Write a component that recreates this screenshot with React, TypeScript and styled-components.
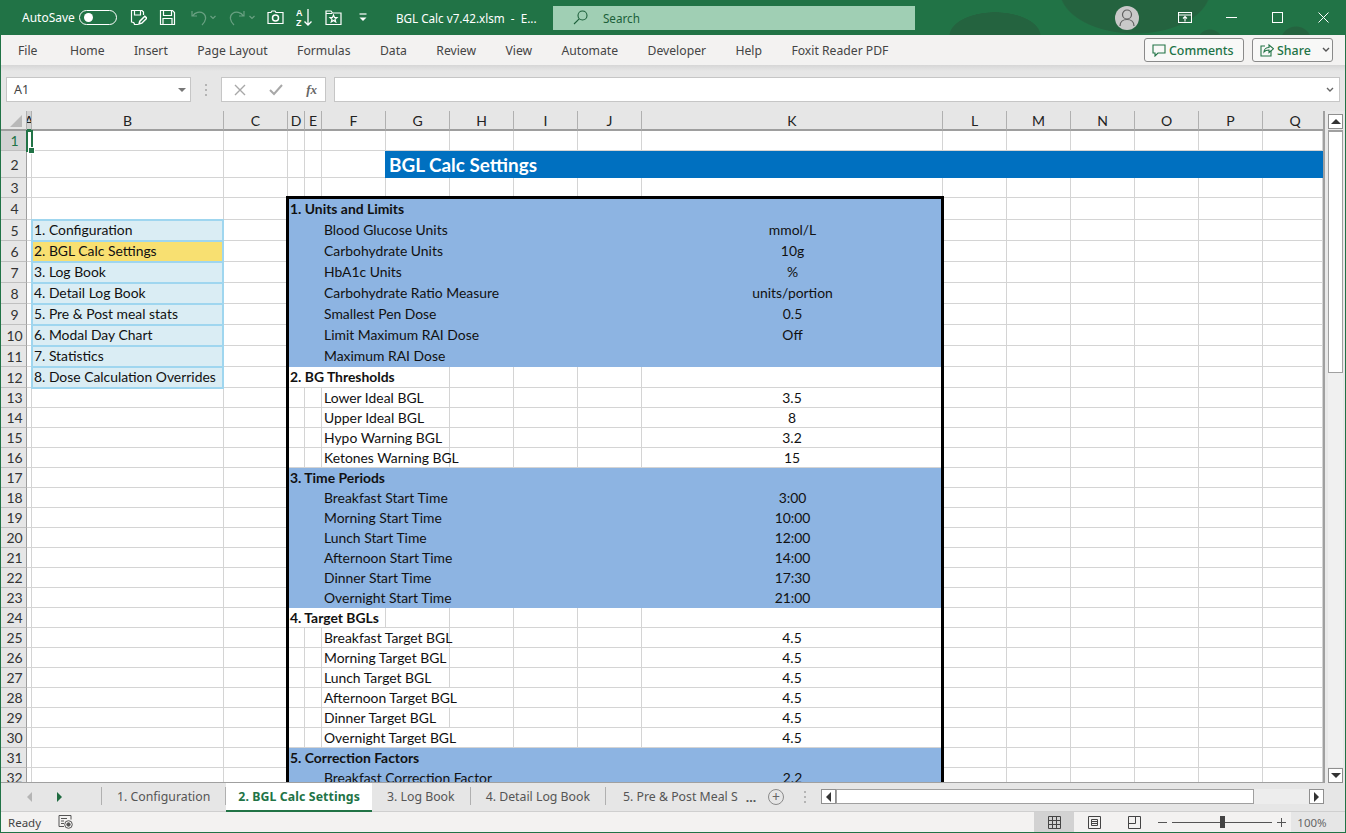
import React from "react";
import styled, { createGlobalStyle } from "styled-components";

const GlobalStyle = createGlobalStyle`
  html, body, #root { margin: 0; padding: 0; height: 100%; }
  body { overflow: hidden; background: #e6e6e6; font-family: "Noto Sans", sans-serif; }
`;

const UI_FONT = `"Noto Sans", "Open Sans", sans-serif`;
const CELL_FONT = `Lato, "Liberation Sans", sans-serif`;
const GREEN = "#217346";

const COLUMNS = ["A", "B", "C", "D", "E", "F", "G", "H", "I", "J", "K", "L", "M", "N", "O", "P", "Q"];
const COLUMN_WIDTHS = "26px 5px 192px 64px 17px 17px 64px 64px 64px 64px 64px 301px 64px 64px 64px 64px 64px 60px";
const ROW_HEIGHTS = "20px 20px 27px 20px 22px repeat(8, 21px) repeat(20, 20px)";

type TableRow =
  | { kind: "head"; text: string; blue: boolean; span: number }
  | { kind: "item"; label: string; value?: string; blue: boolean; span: number };

const head = (text: string, blue: boolean, span: number): TableRow => ({ kind: "head", text, blue, span });
const item = (label: string, value: string | undefined, blue: boolean, span = 2): TableRow => ({
  kind: "item",
  label,
  value,
  blue,
  span,
});

const TABLE: TableRow[] = [
  head("1. Units and Limits", true, 7),
  item("Blood Glucose Units", "mmol/L", true),
  item("Carbohydrate Units", "10g", true),
  item("HbA1c Units", "%", true),
  item("Carbohydrate Ratio Measure", "units/portion", true),
  item("Smallest Pen Dose", "0.5", true),
  item("Limit Maximum RAI Dose", "Off", true),
  item("Maximum RAI Dose", undefined, true),
  head("2. BG Thresholds", false, 4),
  item("Lower Ideal BGL", "3.5", false),
  item("Upper Ideal BGL", "8", false),
  item("Hypo Warning BGL", "3.2", false),
  item("Ketones Warning BGL", "15", false),
  head("3. Time Periods", true, 7),
  item("Breakfast Start Time", "3:00", true),
  item("Morning Start Time", "10:00", true),
  item("Lunch Start Time", "12:00", true),
  item("Afternoon Start Time", "14:00", true),
  item("Dinner Start Time", "17:30", true),
  item("Overnight Start Time", "21:00", true),
  head("4. Target BGLs", false, 3),
  item("Breakfast Target BGL", "4.5", false),
  item("Morning Target BGL", "4.5", false),
  item("Lunch Target BGL", "4.5", false),
  item("Afternoon Target BGL", "4.5", false, 3),
  item("Dinner Target BGL", "4.5", false),
  item("Overnight Target BGL", "4.5", false, 3),
  head("5. Correction Factors", true, 7),
  item("Breakfast Correction Factor", "2.2", true),
];

const MENU = [
  "1. Configuration",
  "2. BGL Calc Settings",
  "3. Log Book",
  "4. Detail Log Book",
  "5. Pre & Post meal stats",
  "6. Modal Day Chart",
  "7. Statistics",
  "8. Dose Calculation Overrides",
];

const RIBBON_TABS = [
  "File",
  "Home",
  "Insert",
  "Page Layout",
  "Formulas",
  "Data",
  "Review",
  "View",
  "Automate",
  "Developer",
  "Help",
  "Foxit Reader PDF",
];

const App_ = styled.div`
  width: 1346px;
  height: 833px;
  box-sizing: border-box;
  display: flex;
  flex-direction: column;
  border-left: 1px solid ${GREEN};
  border-right: 1px solid ${GREEN};
  border-bottom: 1px solid ${GREEN};
  overflow: hidden;
  font-family: ${UI_FONT};
`;

/* title bar */
const TitleBar = styled.div`
  height: 35px;
  flex: none;
  margin: 0 -1px;
  display: flex;
  align-items: center;
  color: #fff;
  background:
    radial-gradient(ellipse 76px 44px at 1135px -10px, #24633f 98%, transparent 100%),
    radial-gradient(ellipse 46px 24px at 995px 36px, #24633f 98%, transparent 100%),
    radial-gradient(circle at 1296px 42px, #24633f 0 15px, transparent 16px),
    radial-gradient(circle at 1210px 42px, #24633f 0 12px, transparent 13px),
    #217346;
`;

const AutoSaveLabel = styled.span`
  margin-left: 22px;
  font-size: 12px;
`;

const Toggle = styled.span`
  width: 38px;
  height: 15px;
  margin-left: 4px;
  box-sizing: border-box;
  border: 1.5px solid #fff;
  border-radius: 8px;
  display: flex;
  align-items: center;
  padding-left: 4px;
  &::before {
    content: "";
    width: 9px;
    height: 9px;
    border-radius: 50%;
    background: #fff;
  }
`;

const QuickIcons = styled.div`
  display: flex;
  align-items: center;
  margin-left: 13px;
  height: 100%;
`;

const QuickIcon = styled.svg<{ $gap?: number; $dim?: boolean }>`
  flex: none;
  margin-right: ${(p) => p.$gap ?? 0}px;
  fill: none;
  stroke: #fff;
  stroke-width: 1.2;
  opacity: ${(p) => (p.$dim ? 0.32 : 1)};
`;

const FileName = styled.span`
  margin-left: 29px;
  width: 157px;
  flex: none;
  font-size: 11.7px;
  white-space: pre;
`;

const SearchBox = styled.div`
  width: 362px;
  height: 24px;
  flex: none;
  display: flex;
  align-items: center;
  gap: 15px;
  padding-left: 20px;
  box-sizing: border-box;
  background: #a0cfb4;
  color: #1c5f3a;
  font-size: 11.7px;
`;

const TitleRight = styled.div`
  margin-left: auto;
  display: flex;
  align-items: center;
  height: 100%;
`;

const Avatar = styled.span`
  width: 24px;
  height: 24px;
  border-radius: 50%;
  background: #c9c9c9;
  display: flex;
  align-items: center;
  justify-content: center;
  margin-right: 23px;
`;

const WindowButton = styled.span`
  width: 46px;
  height: 100%;
  display: flex;
  align-items: center;
  justify-content: center;
`;

/* ribbon tabs */
const Ribbon = styled.div`
  height: 30px;
  flex: none;
  display: flex;
  align-items: center;
  background: #f3f2f1;
  padding-left: 17px;
  color: #444;
  font-size: 12.2px;
`;

const RibbonTabs = styled.nav`
  display: flex;
  gap: 29.4px;
`;

const RibbonTab = styled.span<{ $first?: boolean }>`
  margin-right: ${(p) => (p.$first ? 3 : 0)}px;
  white-space: nowrap;
`;

const RibbonActions = styled.div`
  margin-left: auto;
  display: flex;
  gap: 8px;
  padding-right: 12px;
`;

const ActionButton = styled.button<{ $width: number }>`
  width: ${(p) => p.$width}px;
  height: 24px;
  padding: 0 0 0 7px;
  display: flex;
  align-items: center;
  gap: 3px;
  box-sizing: border-box;
  background: #f8f8f7;
  border: 1px solid #8a8a8a;
  border-radius: 3px;
  color: ${GREEN};
  font-family: ${UI_FONT};
  font-size: 12.4px;
  font-weight: 500;
`;

/* formula bar */
const FormulaBar = styled.div`
  height: 46px;
  flex: none;
  box-sizing: border-box;
  padding: 12px 5px 9px 5px;
  display: flex;
  align-items: stretch;
  background: linear-gradient(#d6d6d6 0, #e6e6e6 6px);
`;

const NameBox = styled.div`
  width: 185px;
  box-sizing: border-box;
  background: #fff;
  border: 1px solid #c6c6c6;
  display: flex;
  align-items: center;
  justify-content: space-between;
  padding: 0 4px 0 7px;
  font-size: 12.5px;
  color: #444;
`;

const Caret = styled.span`
  width: 0;
  height: 0;
  border-left: 4px solid transparent;
  border-right: 4px solid transparent;
  border-top: 4px solid #777;
`;

const GripDots = styled.span<{ $height?: number; $left?: number; $right?: number }>`
  flex: none;
  width: 2px;
  height: ${(p) => p.$height ?? 12}px;
  margin: 0 ${(p) => p.$right ?? 14}px 0 ${(p) => p.$left ?? 14}px;
  align-self: center;
  background: repeating-linear-gradient(#b4b4b4 0 2px, transparent 2px 5px);
`;

const FunctionBox = styled.div`
  width: 105px;
  box-sizing: border-box;
  background: #fff;
  border: 1px solid #c6c6c6;
  display: flex;
  align-items: center;
  justify-content: space-between;
  padding: 0 8px 0 12px;
`;

const FxLabel = styled.span`
  font-family: "Liberation Serif", serif;
  font-style: italic;
  font-weight: 700;
  font-size: 13px;
  color: #666;
`;

const FormulaInput = styled.div`
  margin-left: 8px;
  flex: 1;
  box-sizing: border-box;
  background: #fff;
  border: 1px solid #c6c6c6;
  display: flex;
  align-items: center;
  justify-content: flex-end;
  padding-right: 5px;
`;

/* sheet */
const SheetArea = styled.div`
  flex: 1;
  min-height: 0;
  display: flex;
`;

const SheetGrid = styled.div`
  width: 1322px;
  flex: none;
  position: relative;
  display: grid;
  grid-template-columns: ${COLUMN_WIDTHS};
  grid-template-rows: ${ROW_HEIGHTS};
  overflow: hidden;
  background: #fff;
  border-right: 2px solid #a0a0a0;
  border-bottom: 1px solid #a0a0a0;
  box-sizing: content-box;
  font-family: ${CELL_FONT};
  font-size: 13.9px;
  color: #111;
`;

const Corner = styled.div`
  background: #e6e6e6;
  border-right: 1px solid #b0b0b0;
  border-bottom: 2px solid #9e9e9e;
  box-sizing: border-box;
  position: relative;
  &::after {
    content: "";
    position: absolute;
    right: 4px;
    bottom: 2px;
    border-style: solid;
    border-width: 0 0 12px 12px;
    border-color: transparent transparent #b9b9b9 transparent;
  }
`;

const ColumnHeader = styled.div<{ $active?: boolean; $last?: boolean }>`
  box-sizing: border-box;
  background: ${(p) => (p.$active ? "#d2d2d2" : "#e6e6e6")};
  border-right: ${(p) => (p.$last ? "none" : "1px solid #b0b0b0")};
  border-bottom: 2px solid ${(p) => (p.$active ? GREEN : "#9e9e9e")};
  padding-left: ${(p) => (p.$last ? 4 : 0)}px;
  display: flex;
  align-items: center;
  justify-content: center;
  overflow: hidden;
  color: #222;
  font-size: 14px;
`;

const RowHeader = styled.div<{ $active?: boolean }>`
  box-sizing: border-box;
  background: ${(p) => (p.$active ? "#d2d2d2" : "#e6e6e6")};
  border-right: 1px solid #9e9e9e;
  border-bottom: 1px solid #c0c0c0;
  display: flex;
  align-items: center;
  justify-content: center;
  padding-left: 2px;
  color: ${(p) => (p.$active ? GREEN : "#333")};
  font-size: 14px;
`;

const Cell = styled.div<{ $span?: number; $fill?: string; $bare?: boolean; $lift?: boolean }>`
  grid-column: span ${(p) => p.$span ?? 1};
  box-sizing: border-box;
  min-width: 0;
  display: flex;
  align-items: center;
  white-space: nowrap;
  padding-bottom: ${(p) => (p.$lift ? 2 : p.$bare ? 1 : 0)}px;
  background: ${(p) => p.$fill ?? "transparent"};
  border-right: ${(p) => (p.$bare ? "none" : "1px solid #d4d4d4")};
  border-bottom: ${(p) => (p.$bare ? "none" : "1px solid #d4d4d4")};
`;

const TitleCell = styled(Cell)`
  background: #0070c0;
  box-shadow: -1px 0 0 #0070c0;
  color: #fff;
  font-weight: 700;
  font-size: 18.9px;
  padding-left: 3px;
  padding-bottom: 1px;
`;

const MenuCell = styled(Cell)<{ $current?: boolean }>`
  position: relative;
  z-index: 1;
  margin-right: 1px;
  background: ${(p) => (p.$current ? "#f8e071" : "#daedf4")};
  border: none;
  box-shadow: inset 0 0 0 1px #9fd6ef, 0 0 0 1px #9fd6ef;
  padding-left: 2px;
  padding-bottom: 2px;
`;

const HeadCell = styled(Cell)`
  font-weight: 700;
  padding-left: 2px;
`;

const LabelCell = styled(Cell)`
  padding-left: 2px;
`;

const ValueCell = styled(Cell)`
  justify-content: center;
`;

/* both overlays are placed by grid lines but stay out of the auto-placement */
const TableFrame = styled.div`
  position: absolute;
  grid-column: 5 / 13;
  grid-row: 5 / 34;
  top: -2px;
  left: -2px;
  right: -1px;
  bottom: -12px;
  border: 3px solid #000;
  z-index: 2;
  pointer-events: none;
`;

const SelectionBox = styled.div`
  position: absolute;
  grid-column: 2 / 3;
  grid-row: 2 / 3;
  top: -1px;
  left: -1px;
  right: -1px;
  bottom: -1px;
  border: 2px solid ${GREEN};
  z-index: 3;
  &::after {
    content: "";
    position: absolute;
    right: -3px;
    bottom: -3px;
    width: 5px;
    height: 5px;
    background: ${GREEN};
    outline: 1px solid #fff;
  }
`;

const VScroll = styled.div`
  flex: 1;
  display: flex;
  flex-direction: column;
  align-items: center;
  padding-top: 3px;
  padding-left: 1px;
  background: #e9e9e9;
`;

const VTrack = styled.div`
  flex: 1;
  width: 15px;
  background: #f0f0f0;
  margin: 1px 0;
`;

const VThumb = styled.div`
  height: 243px;
  box-sizing: border-box;
  background: #fff;
  border: 1px solid #a0a0a0;
  border-top-width: 2px;
`;

const ScrollButton = styled.div`
  width: 15px;
  height: 15px;
  flex: none;
  box-sizing: border-box;
  background: #fff;
  border: 1px solid #8f8f8f;
  display: flex;
  align-items: center;
  justify-content: center;
`;

const Arrow = styled.span<{ $dir: "up" | "down" | "left" | "right"; $color?: string }>`
  width: 0;
  height: 0;
  border-style: solid;
  border-color: transparent;
  ${(p) => {
    const c = p.$color ?? "#333";
    switch (p.$dir) {
      case "up":
        return `border-width: 0 5px 5px 5px; border-bottom-color: ${c};`;
      case "down":
        return `border-width: 5px 5px 0 5px; border-top-color: ${c};`;
      case "left":
        return `border-width: 5px 5px 5px 0; border-right-color: ${c};`;
      default:
        return `border-width: 5px 0 5px 5px; border-left-color: ${c};`;
    }
  }}
`;

/* tabs */
const TabBar = styled.div`
  height: 29px;
  flex: none;
  display: flex;
  align-items: stretch;
  background: #e6e6e6;
  border-bottom: 1px solid #cfcfcf;
  box-sizing: border-box;
  font-size: 12.3px;
  color: #555;
`;

const TabNav = styled.div`
  width: 100px;
  flex: none;
  display: flex;
  align-items: center;
  padding-left: 26px;
  gap: 25px;
  box-sizing: border-box;
`;

const Tab = styled.div<{ $active?: boolean; $clip?: number }>`
  flex: none;
  display: flex;
  align-items: center;
  box-sizing: border-box;
  margin: ${(p) => (p.$active ? "0 0 -1px 0" : "4px 0 6px")};
  padding: 0 ${(p) => (p.$active ? 12 : p.$clip ? 0 : 15)}px 0 ${(p) => (p.$active ? 12 : p.$clip ? 17 : 15)}px;
  white-space: nowrap;
  width: ${(p) => (p.$clip ? `${p.$clip}px` : "auto")};
  letter-spacing: ${(p) => (p.$active ? 0.1 : 0)}px;
  background: ${(p) => (p.$active ? "#fff" : "transparent")};
  color: ${(p) => (p.$active ? GREEN : "#555")};
  font-weight: ${(p) => (p.$active ? 700 : 400)};
  border-right: ${(p) => (p.$active || p.$clip ? "none" : "1px solid #b0b0b0")};
  border-bottom: ${(p) => (p.$active ? `2px solid ${GREEN}` : "none")};
`;

const FirstDivider = styled.span`
  width: 1px;
  flex: none;
  margin: 4px 0 6px;
  background: #b0b0b0;
`;

const More = styled.span`
  flex: none;
  align-self: center;
  width: 22px;
  text-align: center;
  color: #555;
  font-weight: 700;
`;

const AddSheet = styled.span`
  flex: none;
  align-self: center;
  width: 16px;
  height: 16px;
  margin-left: 6px;
  box-sizing: border-box;
  border: 1.5px solid #8a8a8a;
  border-radius: 50%;
  display: flex;
  align-items: center;
  justify-content: center;
  color: #666;
  font-size: 14px;
  line-height: 1;
`;

const HScroll = styled.div`
  flex: 1;
  height: 15px;
  align-self: center;
  margin: 0 21px 1px 0;
  display: flex;
  background: #ededed;
`;

const HThumb = styled.div`
  width: 418px;
  flex: none;
  box-sizing: border-box;
  background: #fff;
  border: 1px solid #a0a0a0;
`;

const HSpacer = styled.div`
  flex: 1;
`;

/* status bar */
const StatusBar = styled.div`
  height: 20px;
  flex: none;
  display: flex;
  align-items: center;
  background: #f3f2f1;
  font-size: 11.5px;
  color: #444;
`;

const Ready = styled.span`
  margin-left: 7px;
  width: 50px;
`;

const ViewGroup = styled.div`
  margin-left: auto;
  height: 100%;
  display: flex;
  align-items: stretch;
`;

const ViewButton = styled.span<{ $active?: boolean }>`
  width: 40px;
  display: flex;
  align-items: center;
  justify-content: center;
  background: ${(p) => (p.$active ? "#d2d2d2" : "transparent")};
`;

const ZoomControl = styled.div`
  margin-left: 4px;
  display: flex;
  align-items: center;
  gap: 5px;
`;

const ZoomSign = styled.span`
  width: 9px;
  height: 1px;
  background: #555;
  position: relative;
`;

const ZoomPlus = styled(ZoomSign)`
  &::after {
    content: "";
    position: absolute;
    left: 4px;
    top: -4px;
    width: 1px;
    height: 9px;
    background: #555;
  }
`;

const ZoomTrack = styled.div`
  width: 100px;
  height: 1px;
  background: #555;
  display: flex;
  align-items: center;
  justify-content: center;
`;

const ZoomThumb = styled.span`
  width: 5px;
  height: 12px;
  background: #444;
  flex: none;
`;

const ZoomValue = styled.span`
  width: 54px;
  height: 100%;
  box-sizing: border-box;
  padding-right: 12px;
  display: flex;
  align-items: center;
  justify-content: center;
  background: #e6e6e6;
  color: #666;
  font-size: 11.5px;
`;

const ChevronSlot = styled.span`
  margin-left: 8px;
  display: flex;
`;

const SaveEditIcon = () => (
  <QuickIcon width={17} height={17} viewBox="0 0 17 17" $gap={12}>
    <path d="M13.5 6V3L12 1.5H1.5V13c1.5 0 3 .5 3 2.5H8" />
    <path d="M4.5 1.5V6h6V1.5" />
    <path d="M9 15l.8-2.8 5-5 2 2-5 5z" strokeWidth={1.5} />
  </QuickIcon>
);

const SaveIcon = () => (
  <QuickIcon width={17} height={17} viewBox="0 0 17 17" $gap={13}>
    <path d="M1.5 1.5h12l2 2v12h-14z" />
    <path d="M4.5 1.5v5h8v-5M4 15.5v-6h9v6" />
  </QuickIcon>
);

const UndoIcon = ({ flip }: { flip?: boolean }) => (
  <QuickIcon width={27} height={17} viewBox="0 0 27 17" $gap={12} $dim>
    {flip ? (
      <path d="M16 2v5h-5M15.5 7C13 3 8 2 4.5 4.5 1 7.5 2 12 6 16" />
    ) : (
      <path d="M3 2v5h5M3.5 7C6 3 11 2 14.5 4.5 18 7.5 17 12 13 16" />
    )}
    <path d="M21.5 7l2.5 2.5L26.5 7" />
  </QuickIcon>
);

const CameraIcon = () => (
  <QuickIcon width={17} height={17} viewBox="0 0 17 17" $gap={12}>
    <path d="M1 3.5h3l1-1.5h3l1 1.5h7v11H1z" />
    <circle cx="8.5" cy="9" r="3" strokeWidth={1.5} />
  </QuickIcon>
);

const SortIcon = () => (
  <QuickIcon width={17} height={19} viewBox="0 0 17 19" $gap={12}>
    <text x="0" y="8" fontSize="9" fill="#fff" stroke="none" fontWeight="700" fontFamily="Liberation Sans">
      A
    </text>
    <text x="0" y="18" fontSize="9" fill="#fff" stroke="none" fontWeight="700" fontFamily="Liberation Sans">
      Z
    </text>
    <path d="M12 1v16M8.5 13.5L12 17l3.5-3.5" strokeWidth={1.3} />
  </QuickIcon>
);

const StarFolderIcon = () => (
  <QuickIcon width={17} height={17} viewBox="0 0 17 17" $gap={17}>
    <path d="M1 2h5l1.5 2H16v11.5H1zM1 4.5h6" />
    <path d="M8.5 6l1 2.4 2.5.2-2 1.7.7 2.5-2.2-1.4-2.2 1.4.7-2.5-2-1.7 2.5-.2z" />
  </QuickIcon>
);

const CustomizeIcon = () => (
  <QuickIcon width={8} height={17} viewBox="0 0 8 17">
    <path d="M0.5 5h7" />
    <path d="M0.5 8.5h7l-3.5 3.5z" fill="#fff" stroke="none" />
  </QuickIcon>
);

const SearchGlass = () => (
  <svg width="15" height="15" viewBox="0 0 15 15" fill="none" stroke="#1c5f3a" strokeWidth="1.1">
    <circle cx="9.5" cy="5.5" r="4.5" />
    <path d="M6.2 8.8L1 14" />
  </svg>
);

const PersonIcon = () => (
  <svg width="16" height="18" viewBox="0 0 16 18" fill="none" stroke="#5f5f5f" strokeWidth="1.2">
    <circle cx="8" cy="5.5" r="4.5" />
    <path d="M1 17c0-4 3-6.5 7-6.5s7 2.5 7 6.5" />
  </svg>
);

const RibbonDisplayIcon = () => (
  <svg width="14" height="11" viewBox="0 0 14 11" fill="none" stroke="#fff" strokeWidth="1.1">
    <rect x="0.5" y="0.5" width="13" height="10" />
    <path d="M0.5 3h13M7 9.5V5M5 6.5L7 4.5l2 2" />
  </svg>
);

const MinimizeIcon = () => (
  <svg width="11" height="11" viewBox="0 0 11 11" stroke="#fff">
    <path d="M0 5.5h11" />
  </svg>
);

const MaximizeIcon = () => (
  <svg width="11" height="11" viewBox="0 0 11 11" fill="none" stroke="#fff">
    <rect x="0.5" y="0.5" width="10" height="10" />
  </svg>
);

const CloseIcon = () => (
  <svg width="11" height="11" viewBox="0 0 11 11" stroke="#fff">
    <path d="M0.5 0.5l10 10M10.5 0.5l-10 10" />
  </svg>
);

const CommentIcon = () => (
  <svg width="14" height="14" viewBox="0 0 14 14" fill="none" stroke={GREEN} strokeWidth="1.1">
    <path d="M1 2h12v8H6l-3 3v-3H1z" />
  </svg>
);

const ShareIcon = () => (
  <svg width="14" height="14" viewBox="0 0 14 14" fill="none" stroke={GREEN} strokeWidth="1.1">
    <path d="M5 3H1v10h10V8" />
    <path d="M4 9c0-3 2.5-4.5 5-4.5V2l4.5 3.8L9 9.5V7C7 7 5 7.5 4 9z" />
  </svg>
);

const ChevronIcon = ({ color }: { color: string }) => (
  <svg width="8" height="6" viewBox="0 0 8 6" fill="none" stroke={color} strokeWidth="1.4">
    <path d="M1 1l3 3 3-3" />
  </svg>
);

const CancelIcon = () => (
  <svg width="12" height="12" viewBox="0 0 12 12" stroke="#a8a8a8" strokeWidth="1.4">
    <path d="M1 1l10 10M11 1L1 11" />
  </svg>
);

const CheckIcon = () => (
  <svg width="14" height="12" viewBox="0 0 14 12" fill="none" stroke="#a8a8a8" strokeWidth="2">
    <path d="M1 6l4 4 8-9" />
  </svg>
);

const MacroIcon = () => (
  <svg width="15" height="14" viewBox="0 0 15 14" fill="none" stroke="#555">
    <path d="M1 .5h12v4M1 .5v11h5M3 3.5h6M3 6h3M3 8.5h3" />
    <circle cx="10.5" cy="9.5" r="3.8" />
    <circle cx="10.5" cy="9.5" r="1.7" fill="#555" />
  </svg>
);

const NormalViewIcon = () => (
  <svg width="13" height="13" viewBox="0 0 13 13" fill="none" stroke="#444">
    <path d="M.5.5h12v12H.5zM.5 4.5h12M.5 8.5h12M4.5.5v12M8.5.5v12" />
  </svg>
);

const PageViewIcon = () => (
  <svg width="13" height="13" viewBox="0 0 13 13" fill="none" stroke="#444">
    <path d="M.5.5h12v12H.5zM3.5 3.5h6v6h-6zM3.5 5.5h6M3.5 7.5h6" />
  </svg>
);

const BreakViewIcon = () => (
  <svg width="13" height="13" viewBox="0 0 13 13" fill="none" stroke="#444">
    <path d="M.5.5h12v12H.5zM.5 7.5h7v-7" />
  </svg>
);

const plainCells = (keyBase: string, count: number) =>
  Array.from({ length: count }, (_, i) => <Cell key={`${keyBase}-${i}`} />);

const tableCells = (row: TableRow, r: number) => {
  const fill = row.blue ? "#8db4e2" : undefined;
  if (row.kind === "head") {
    return (
      <React.Fragment key={`t${r}`}>
        <HeadCell $span={row.span} $fill={fill} $bare={row.blue} $lift={r <= 12}>
          {row.text}
        </HeadCell>
        {plainCells(`t${r}`, 7 - row.span)}
        <Cell $fill={fill} $bare={row.blue} />
      </React.Fragment>
    );
  }
  const span = row.blue ? 5 : row.span;
  const lift = r <= 11;
  return (
    <React.Fragment key={`t${r}`}>
      <Cell $fill={fill} $bare={row.blue} />
      <Cell $fill={fill} $bare={row.blue} />
      <LabelCell $span={span} $fill={fill} $bare={row.blue} $lift={lift}>
        {row.label}
      </LabelCell>
      {plainCells(`t${r}`, 5 - span)}
      <ValueCell $fill={fill} $bare={row.blue} $lift={lift}>
        {row.value}
      </ValueCell>
    </React.Fragment>
  );
};

const renderRow = (n: number) => {
  const active = n === 1;
  const menu = n >= 5 && n <= 12 ? MENU[n - 5] : null;
  const table = n >= 4 ? TABLE[n - 4] : null;
  return (
    <React.Fragment key={n}>
      <RowHeader $active={active}>{n}</RowHeader>
      <Cell />
      {menu ? <MenuCell $current={n === 6}>{menu}</MenuCell> : <Cell />}
      <Cell />
      {table ? (
        tableCells(table, n)
      ) : n === 2 ? (
        <>
          {plainCells("r2", 3)}
          <TitleCell $span={11} $bare>
            BGL Calc Settings
          </TitleCell>
        </>
      ) : (
        plainCells(`r${n}a`, 8)
      )}
      {n === 2 ? null : plainCells(`r${n}b`, 6)}
    </React.Fragment>
  );
};

const App: React.FC = () => (
  <App_>
    <GlobalStyle />
    <TitleBar>
      <AutoSaveLabel>AutoSave</AutoSaveLabel>
      <Toggle />
      <QuickIcons>
        <SaveEditIcon />
        <SaveIcon />
        <UndoIcon />
        <UndoIcon flip />
        <CameraIcon />
        <SortIcon />
        <StarFolderIcon />
        <CustomizeIcon />
      </QuickIcons>
      <FileName>BGL Calc v7.42.xlsm  -  E...</FileName>
      <SearchBox>
        <SearchGlass />
        Search
      </SearchBox>
      <TitleRight>
        <Avatar>
          <PersonIcon />
        </Avatar>
        <WindowButton>
          <RibbonDisplayIcon />
        </WindowButton>
        <WindowButton>
          <MinimizeIcon />
        </WindowButton>
        <WindowButton>
          <MaximizeIcon />
        </WindowButton>
        <WindowButton>
          <CloseIcon />
        </WindowButton>
      </TitleRight>
    </TitleBar>

    <Ribbon>
      <RibbonTabs>
        {RIBBON_TABS.map((t, i) => (
          <RibbonTab key={t} $first={i === 0}>
            {t}
          </RibbonTab>
        ))}
      </RibbonTabs>
      <RibbonActions>
        <ActionButton $width={100}>
          <CommentIcon />
          Comments
        </ActionButton>
        <ActionButton $width={81}>
          <ShareIcon />
          Share
          <ChevronSlot>
            <ChevronIcon color="#555" />
          </ChevronSlot>
        </ActionButton>
      </RibbonActions>
    </Ribbon>

    <FormulaBar>
      <NameBox>
        A1
        <Caret />
      </NameBox>
      <GripDots />
      <FunctionBox>
        <CancelIcon />
        <CheckIcon />
        <FxLabel>fx</FxLabel>
      </FunctionBox>
      <FormulaInput>
        <ChevronIcon color="#666" />
      </FormulaInput>
    </FormulaBar>

    <SheetArea>
      <SheetGrid>
        <Corner />
        {COLUMNS.map((c) => (
          <ColumnHeader key={c} $active={c === "A"} $last={c === "Q"}>
            {c}
          </ColumnHeader>
        ))}
        {Array.from({ length: 32 }, (_, i) => renderRow(i + 1))}
        <TableFrame />
        <SelectionBox />
      </SheetGrid>
      <VScroll>
        <ScrollButton>
          <Arrow $dir="up" />
        </ScrollButton>
        <VTrack>
          <VThumb />
        </VTrack>
        <ScrollButton>
          <Arrow $dir="down" />
        </ScrollButton>
      </VScroll>
    </SheetArea>

    <TabBar>
      <TabNav>
        <Arrow $dir="left" $color="#b5b5b5" />
        <Arrow $dir="right" $color="#1f6b40" />
      </TabNav>
      <FirstDivider />
      <Tab>1. Configuration</Tab>
      <Tab $active>2. BGL Calc Settings</Tab>
      <Tab>3. Log Book</Tab>
      <Tab>4. Detail Log Book</Tab>
      <Tab $clip={134}>5. Pre &amp; Post Meal S</Tab>
      <More>...</More>
      <AddSheet>+</AddSheet>
      <GripDots $left={20} $right={15} $height={13} />
      <HScroll>
        <ScrollButton>
          <Arrow $dir="left" />
        </ScrollButton>
        <HThumb />
        <HSpacer />
        <ScrollButton>
          <Arrow $dir="right" />
        </ScrollButton>
      </HScroll>
    </TabBar>

    <StatusBar>
      <Ready>Ready</Ready>
      <MacroIcon />
      <ViewGroup>
        <ViewButton $active>
          <NormalViewIcon />
        </ViewButton>
        <ViewButton>
          <PageViewIcon />
        </ViewButton>
        <ViewButton>
          <BreakViewIcon />
        </ViewButton>
        <ZoomControl>
          <ZoomSign />
          <ZoomTrack>
            <ZoomThumb />
          </ZoomTrack>
          <ZoomPlus />
          <ZoomValue>100%</ZoomValue>
        </ZoomControl>
      </ViewGroup>
    </StatusBar>
  </App_>
);

export default App;
